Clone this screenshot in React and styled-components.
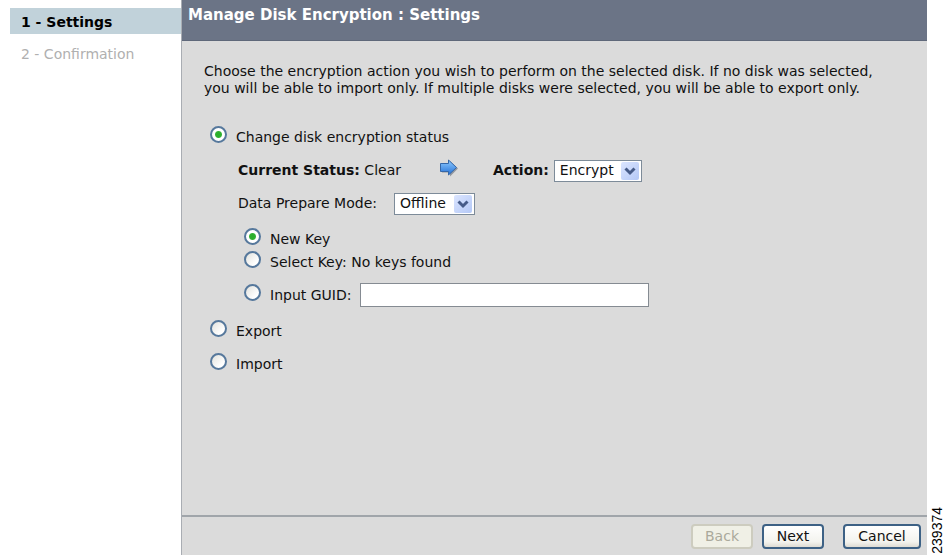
import React, { useState } from "react";
import styled, { createGlobalStyle } from "styled-components";

const GlobalStyle = createGlobalStyle`
  * { box-sizing: border-box; }
  body {
    margin: 0;
    background: #fff;
    color: #111;
    font: 14px/17px Verdana, "DejaVu Sans", sans-serif;
  }
`;

const Page = styled.div`
  display: flex;
  min-height: 100vh;
`;

const Steps = styled.nav`
  flex: 0 0 181px;
  padding: 8px 0 0 10px;
`;

const StepList = styled.ol`
  display: flex;
  flex-direction: column;
  gap: 6px;
  margin: 0;
  padding: 0;
  list-style: none;
`;

const Step = styled.li`
  height: 26px;
  padding-left: 11px;
  line-height: 28px;
  background: ${(p) => (p.$current ? "#c1d2da" : "transparent")};
  color: ${(p) => (p.$current ? "#000" : "#b0b0b0")};
  font-weight: ${(p) => (p.$current ? "bold" : "normal")};
`;

const Panel = styled.main`
  flex: 1;
  min-width: 0;
  display: flex;
  flex-direction: column;
  background: #dbdbdb;
  border-left: 1px solid #a9adb3;
`;

const Title = styled.h1`
  height: 41px;
  margin: 0;
  padding: 7px 6px;
  background: #6b7486;
  border-bottom: 1px solid #5f687a;
  color: #fff;
  font-size: 15px;
  line-height: 17px;
`;

const Form = styled.form`
  flex: 1;
  display: flex;
  flex-direction: column;
`;

const Content = styled.div`
  flex: 1;
  padding: 22px 28px 0 22px;
`;

const Intro = styled.p`
  margin: 0 0 21px;
`;

const Options = styled.div`
  display: flex;
  flex-direction: column;
  padding-left: 6px;
`;

const Row = styled.div`
  display: flex;
  align-items: center;
  height: ${(p) => (p.$compact ? 23 : 33)}px;
`;

const Details = styled.div`
  padding: 3px 0 1px 28px;
`;

const KeyOptions = styled.div`
  display: flex;
  flex-direction: column;
  padding: 5px 0 2px 6px;
`;

const Spaced = styled.div`
  padding-top: 5px;
`;

const Radio = styled.input.attrs({ type: "radio" })`
  appearance: none;
  flex: none;
  width: 17px;
  height: 17px;
  margin: 0 9px 0 0;
  border: 2px solid #56789c;
  border-radius: 50%;
  background: linear-gradient(135deg, #e2e2dd, #fff 75%);
  &:checked {
    background: radial-gradient(circle, #2cae2c 0 2px, #38b538 3px, #fff 4px);
  }
`;

const RadioLabel = styled.label`
  padding-top: 5px;
`;

const Status = styled.span`
  width: 201px;
`;

const Arrow = styled.svg`
  align-self: flex-start;
  width: 20px;
  height: 18px;
  margin: 5px 34px 0 0;
`;

const FieldLabel = styled.label`
  font-weight: ${(p) => (p.$strong ? "bold" : "normal")};
  margin-right: ${(p) => (p.$strong ? 5 : 6)}px;
`;

const FieldGroup = styled.div`
  display: grid;
  grid-template-columns: 156px auto;
  align-items: center;
`;

const SelectBox = styled.span`
  display: grid;
  grid-template-columns: 1fr 20px;
  align-items: center;
  width: ${(p) => p.$width}px;
  height: 22px;
  background: #fff;
  border: 1px solid #7d8b99;
`;

const Select = styled.select`
  appearance: none;
  grid-area: 1 / 1 / 2 / 3;
  width: 100%;
  height: 20px;
  margin: 0;
  padding: 0 20px 0 5px;
  border: 0;
  background: transparent;
  color: #111;
  font: inherit;
`;

const Chevron = styled.svg`
  grid-area: 1 / 2;
  width: 18px;
  height: 18px;
  pointer-events: none;
`;

const GuidInput = styled.input`
  width: 289px;
  height: 24px;
  margin: 4px 0 0 9px;
  padding: 0 4px;
  border: 1px solid #858b92;
  border-radius: 0;
  background: #fff;
  font: inherit;
`;

const Footer = styled.footer`
  display: flex;
  gap: 9px;
  height: 40px;
  padding: 7px 6px 0;
  border-top: 2px solid #a0a5aa;
  justify-content: flex-end;
`;

const Button = styled.button`
  width: ${(p) => (p.$wide ? 78 : 62)}px;
  height: 25px;
  margin-left: ${(p) => (p.$wide ? 10 : 0)}px;
  padding: 0;
  border: 2px solid #3d6185;
  border-radius: 4px;
  background: linear-gradient(#fff, #f3f3ee 75%, #dedbd3);
  color: #111;
  font: inherit;
  &:disabled {
    background: #f0f0e6;
    border-color: #cdccbf;
    color: #aaa99b;
  }
`;

const Gutter = styled.aside`
  flex: 0 0 19px;
  display: flex;
  align-items: flex-end;
  justify-content: center;
  padding-bottom: 1px;
`;

const FigureNumber = styled.span`
  writing-mode: vertical-rl;
  transform: rotate(180deg);
  color: #000;
  font: 14px/16px "Liberation Sans", Arial, sans-serif;
`;

function DropDown({ id, width, options }) {
  return (
    <SelectBox $width={width}>
      <Select id={id}>
        {options.map((o) => (
          <option key={o}>{o}</option>
        ))}
      </Select>
      <Chevron viewBox="0 0 18 18" aria-hidden="true">
        <defs>
          <linearGradient id={`${id}-face`} x2="1" y2="1">
            <stop stopColor="#dbe5ff" />
            <stop offset="1" stopColor="#b4c8f6" />
          </linearGradient>
        </defs>
        <rect width="18" height="18" rx="2" fill={`url(#${id}-face)`} />
        <path d="M4.5 6.5 9 11l4.5-4.5" fill="none" stroke="#465b88" strokeWidth="3" />
      </Chevron>
    </SelectBox>
  );
}

function RadioOption({ id, name, label, value, onChange, compact, children }) {
  return (
    <Row $compact={compact}>
      <Radio id={id} name={name} checked={value === id} onChange={() => onChange(id)} />
      <RadioLabel htmlFor={id}>{label}</RadioLabel>
      {children}
    </Row>
  );
}

export default function App() {
  const [mode, setMode] = useState("change");
  const [keySource, setKeySource] = useState("new-key");
  const modeProps = { name: "mode", value: mode, onChange: setMode };
  const keyProps = { name: "key", value: keySource, onChange: setKeySource };

  return (
    <>
      <GlobalStyle />
      <Page>
        <Steps aria-label="Steps">
          <StepList>
            <Step $current aria-current="step">1 - Settings</Step>
            <Step>2 - Confirmation</Step>
          </StepList>
        </Steps>
        <Panel>
          <Title>Manage Disk Encryption : Settings</Title>
          <Form onSubmit={(e) => e.preventDefault()}>
            <Content>
              <Intro>
                Choose the encryption action you wish to perform on the selected disk. If no disk was
                selected, you will be able to import only. If multiple disks were selected, you will be
                able to export only.
              </Intro>
              <Options>
                <RadioOption id="change" label="Change disk encryption status" {...modeProps} />
                <Details>
                  <Row>
                    <Status>
                      <b>Current Status:</b> Clear
                    </Status>
                    <Arrow viewBox="0 0 20 18" aria-hidden="true">
                      <defs>
                        <linearGradient id="arrow-face" x2="0" y2="1">
                          <stop stopColor="#8fcbff" />
                          <stop offset="1" stopColor="#2470d6" />
                        </linearGradient>
                      </defs>
                      <path d="M3 6h8V2l8 7.500-8 8v-4H3z" fill="#8f959e" />
                      <path
                        d="M1.500 4.500h8v-3.500l8 7.500-8 7.500v-3.500h-8z"
                        fill="url(#arrow-face)"
                        stroke="#3567a8"
                        strokeLinejoin="round"
                      />
                    </Arrow>
                    <FieldLabel $strong htmlFor="action">Action:</FieldLabel>
                    <DropDown id="action" width={88} options={["Encrypt", "Clear"]} />
                  </Row>
                  <Row>
                    <FieldGroup>
                      <FieldLabel htmlFor="prepare">Data Prepare Mode:</FieldLabel>
                      <DropDown id="prepare" width={81} options={["Offline", "Online"]} />
                    </FieldGroup>
                  </Row>
                  <KeyOptions>
                    <RadioOption compact id="new-key" label="New Key" {...keyProps} />
                    <RadioOption compact id="select-key" label="Select Key: No keys found" {...keyProps} />
                    <Spaced>
                      <RadioOption id="input-guid" label="Input GUID:" {...keyProps}>
                        <GuidInput aria-label="GUID" />
                      </RadioOption>
                    </Spaced>
                  </KeyOptions>
                </Details>
                <RadioOption id="export" label="Export" {...modeProps} />
                <RadioOption id="import" label="Import" {...modeProps} />
              </Options>
            </Content>
            <Footer>
              <Button type="button" disabled>Back</Button>
              <Button type="submit">Next</Button>
              <Button type="button" $wide>Cancel</Button>
            </Footer>
          </Form>
        </Panel>
        <Gutter>
          <FigureNumber>239374</FigureNumber>
        </Gutter>
      </Page>
    </>
  );
}
